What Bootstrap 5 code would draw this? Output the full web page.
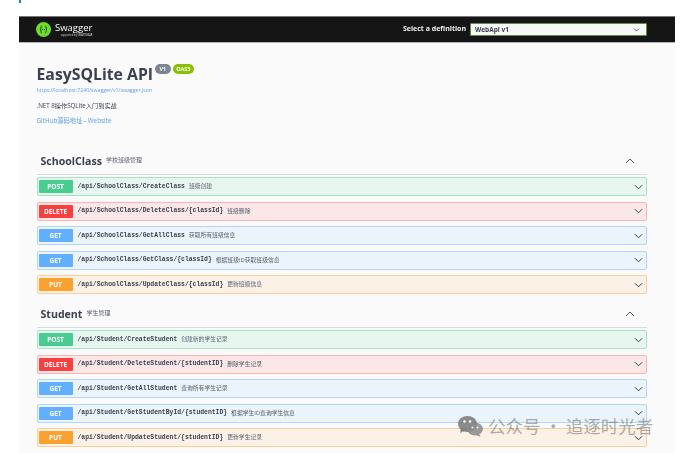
<!DOCTYPE html>
<html lang="zh-CN">
<head>
    <meta charset="UTF-8">
    <meta name="viewport" content="width=device-width, initial-scale=1.0">
    <title>EasySQLite API</title>
    <link href="https://cdn.jsdelivr.net/npm/bootstrap@5.3.0/dist/css/bootstrap.min.css" rel="stylesheet">
    <style>
        html, body { height: 469px; overflow: hidden; background: #fff; }
        body { font-family: "Open Sans", "Noto Sans CJK SC", sans-serif; color: #3b4151; position: relative; }
        .shot { width: 656px; margin-left: 19px; filter: blur(.4px); }
        .corner-mark { width: 2px; height: 3px; background: #0d9488; margin-bottom: 13px; }
        .topbar { height: 27px; background: #151515; border-top: 1px solid #777; border-bottom: 1px solid #b5b5b5; padding: 0 28px 0 17px; }
        .logo-word { color: #fff; font-size: 9.5px; line-height: 10px; margin-left: 4px; }
        .logo-sub { color: #ddd; font-size: 2.6px; line-height: 3px; margin-top: 1px; text-align: right; white-space: nowrap; }
        .def-label { color: #f2f2f2; font-size: 7px; font-weight: 700; margin-right: 4px; }
        .def-select { width: 177px; height: 13px; min-height: 0; padding: 0 0 0 4px; font-size: 6.5px; font-weight: 700; line-height: 11px; color: #3b4151; border: 1px solid #5f8f45; border-radius: 1px; background-color: #f7f7f7; background-size: 7px 6px; background-position: right 6px center; font-family: inherit; }
        .swagger-page { height: 410px; background: #fafafa; padding: 20px 28px 0 17.5px; }
        .api-title { font-size: 15.8px; line-height: 23px; font-weight: 700; margin: 0; color: #3b4151; }
        .pill { font-size: 5.4px; font-weight: 700; line-height: 10px; height: 10px; padding: 0 3.5px; color: #fff; border-radius: 5px; margin-left: 2px; margin-bottom: 12px; }
        .pill-ver { background: #7d8492; padding: 0 4.5px; }
        .pill-oas { background: #89bf04; }
        .spec-link, .info-link { color: #5c9de8; text-decoration: none; }
        .spec-link { font-size: 5.2px; line-height: 8px; display: block; }
        .info-desc { font-size: 6.2px; line-height: 10px; margin: 7px 0 0; }
        .info-links { font-size: 6.3px; line-height: 10px; margin: 5px 0 0; }
        .tag-head { height: 24px; padding: 0 12px 4px 4px; border-bottom: 1px solid #d9dbde; margin-bottom: 2px; }
        .tag-first { margin-top: 25px; }
        .tag-next { margin-top: 10px; }
        .tag-name { font-size: 10.6px; font-weight: 700; line-height: 16px; color: #3b4151; }
        .tag-desc { font-size: 6px; margin-left: 4px; color: #5a6070; }
        .op-row { height: 19px; margin-bottom: 5.5px; padding-left: 1px; padding-right: 3px; border: 1px solid; border-radius: 2px; }
        .method { width: 34px; height: 13px; flex: none; text-align: center; color: #fff; font-size: 6.5px; font-weight: 700; line-height: 13px; border-radius: 1px; }
        .op-path { font-family: "Liberation Mono", monospace; font-size: 6.4px; font-weight: 700; margin-left: 5px; color: #3b4151; white-space: nowrap; }
        .op-desc { font-size: 5.8px; margin-left: 4px; color: #5a6070; white-space: nowrap; }
        .op-chev { margin-left: auto; }
        .op-post { background: #e8f6f0; border-color: #a6e4c8; } .op-post .method { background: #49cc90; }
        .op-delete { background: #fbe7e7; border-color: #f9b4b4; } .op-delete .method { background: #f93e3e; }
        .op-get { background: #ebf3fb; border-color: #b0d6fc; } .op-get .method { background: #61affe; }
        .op-put { background: #fbf1e6; border-color: #fbcf96; } .op-put .method { background: #fca130; }
        .wx-mark { position: absolute; left: 458px; top: 415px; color: rgba(95, 95, 95, .5); font-size: 17.5px; line-height: 22px; gap: 5px; white-space: nowrap; font-family: "Noto Sans CJK SC", sans-serif; }
    </style>
</head>
<body>
    <svg width="0" height="0" class="position-absolute">
        <symbol id="chev-down" viewBox="0 0 10 6"><path d="M1 1l4 4 4-4" fill="none" stroke="#3b4151" stroke-width="1.1"/></symbol>
        <symbol id="chev-up" viewBox="0 0 10 6"><path d="M1 5l4-4 4 4" fill="none" stroke="#555" stroke-width="1"/></symbol>
    </svg>

    <div class="shot">
        <div class="corner-mark"></div>

        <div class="topbar d-flex align-items-center justify-content-between">
            <div class="d-flex align-items-center">
                <svg width="15" height="15" viewBox="0 0 30 30">
                    <circle cx="15" cy="15" r="15" fill="#6fdc2c"/>
                    <path d="M12 8c-3 0-2 4-2.500 6-.2 1-1 1-1.500 1 .5 0 1.300 0 1.500 1 .5 2-.5 6 2.500 6M18 8c3 0 2 4 2.500 6 .2 1 1 1 1.500 1-.5 0-1.300 0-1.500 1-.5 2 .5 6-2.500 6" fill="none" stroke="#1c3d12" stroke-width="1.800"/>
                    <circle cx="13" cy="15" r="1.200" fill="#1c3d12"/><circle cx="17" cy="15" r="1.200" fill="#1c3d12"/>
                </svg>
                <div>
                    <div class="logo-word">Swagger</div>
                    <div class="logo-sub">supported by SMARTBEAR</div>
                </div>
            </div>
            <div class="d-flex align-items-center">
                <span class="def-label">Select a definition</span>
                <select class="form-select def-select"><option>WebApi v1</option></select>
            </div>
        </div>

        <div class="swagger-page">
            <div class="d-flex align-items-center">
                <h1 class="api-title">EasySQLite API</h1>
                <span class="pill pill-ver">V1</span>
                <span class="pill pill-oas">OAS3</span>
            </div>
            <a class="spec-link" href="#">https://localhost:7240/swagger/v1/swagger.json</a>
            <p class="info-desc">.NET 8操作SQLite入门到实战</p>
            <p class="info-links"><a class="info-link" href="#">GitHub源码地址</a> - <a class="info-link" href="#">Website</a></p>

            <div class="tag-head tag-first d-flex align-items-center">
                <span class="tag-name">SchoolClass</span><span class="tag-desc">学校班级管理</span>
                <svg class="ms-auto" width="10" height="6"><use href="#chev-up"/></svg>
            </div>
            <div class="op-row op-post d-flex align-items-center"><span class="method">POST</span><span class="op-path">/api/SchoolClass/CreateClass</span><span class="op-desc">班级创建</span><svg class="op-chev" width="9" height="6"><use href="#chev-down"/></svg></div>
            <div class="op-row op-delete d-flex align-items-center"><span class="method">DELETE</span><span class="op-path">/api/SchoolClass/DeleteClass/{classId}</span><span class="op-desc">班级删除</span><svg class="op-chev" width="9" height="6"><use href="#chev-down"/></svg></div>
            <div class="op-row op-get d-flex align-items-center"><span class="method">GET</span><span class="op-path">/api/SchoolClass/GetAllClass</span><span class="op-desc">获取所有班级信息</span><svg class="op-chev" width="9" height="6"><use href="#chev-down"/></svg></div>
            <div class="op-row op-get d-flex align-items-center"><span class="method">GET</span><span class="op-path">/api/SchoolClass/GetClass/{classId}</span><span class="op-desc">根据班级ID获取班级信息</span><svg class="op-chev" width="9" height="6"><use href="#chev-down"/></svg></div>
            <div class="op-row op-put d-flex align-items-center"><span class="method">PUT</span><span class="op-path">/api/SchoolClass/UpdateClass/{classId}</span><span class="op-desc">更新班级信息</span><svg class="op-chev" width="9" height="6"><use href="#chev-down"/></svg></div>

            <div class="tag-head tag-next d-flex align-items-center">
                <span class="tag-name">Student</span><span class="tag-desc">学生管理</span>
                <svg class="ms-auto" width="10" height="6"><use href="#chev-up"/></svg>
            </div>
            <div class="op-row op-post d-flex align-items-center"><span class="method">POST</span><span class="op-path">/api/Student/CreateStudent</span><span class="op-desc">创建新的学生记录</span><svg class="op-chev" width="9" height="6"><use href="#chev-down"/></svg></div>
            <div class="op-row op-delete d-flex align-items-center"><span class="method">DELETE</span><span class="op-path">/api/Student/DeleteStudent/{studentID}</span><span class="op-desc">删除学生记录</span><svg class="op-chev" width="9" height="6"><use href="#chev-down"/></svg></div>
            <div class="op-row op-get d-flex align-items-center"><span class="method">GET</span><span class="op-path">/api/Student/GetAllStudent</span><span class="op-desc">查询所有学生记录</span><svg class="op-chev" width="9" height="6"><use href="#chev-down"/></svg></div>
            <div class="op-row op-get d-flex align-items-center"><span class="method">GET</span><span class="op-path">/api/Student/GetStudentById/{studentID}</span><span class="op-desc">根据学生ID查询学生信息</span><svg class="op-chev" width="9" height="6"><use href="#chev-down"/></svg></div>
            <div class="op-row op-put d-flex align-items-center"><span class="method">PUT</span><span class="op-path">/api/Student/UpdateStudent/{studentID}</span><span class="op-desc">更新学生记录</span><svg class="op-chev" width="9" height="6"><use href="#chev-down"/></svg></div>
        </div>
    </div>

    <!-- watermark sits on top of the last rows -->
    <div class="wx-mark d-flex align-items-center">
        <svg width="25" height="21" viewBox="0 0 25 21">
            <ellipse cx="9.500" cy="8" rx="9.500" ry="8" fill="#6f6f6f" opacity=".8"/>
            <path d="M3 13l-1 4 5-2.500z" fill="#6f6f6f" opacity=".8"/>
            <ellipse cx="17" cy="13" rx="8" ry="6.500" fill="#8a8a8a" opacity=".85"/>
            <path d="M21 18l1.500 3-4.500-2z" fill="#8a8a8a" opacity=".85"/>
            <circle cx="6.500" cy="5.500" r="1.300" fill="#fff"/><circle cx="12" cy="5.500" r="1.300" fill="#fff"/>
            <circle cx="14.500" cy="11.500" r="1" fill="#fff"/><circle cx="19.500" cy="11.500" r="1" fill="#fff"/>
        </svg>
        <span>公众号 · 追逐时光者</span>
    </div>

    <script src="https://cdn.jsdelivr.net/npm/bootstrap@5.3.0/dist/js/bootstrap.bundle.min.js"></script>
</body>
</html>
